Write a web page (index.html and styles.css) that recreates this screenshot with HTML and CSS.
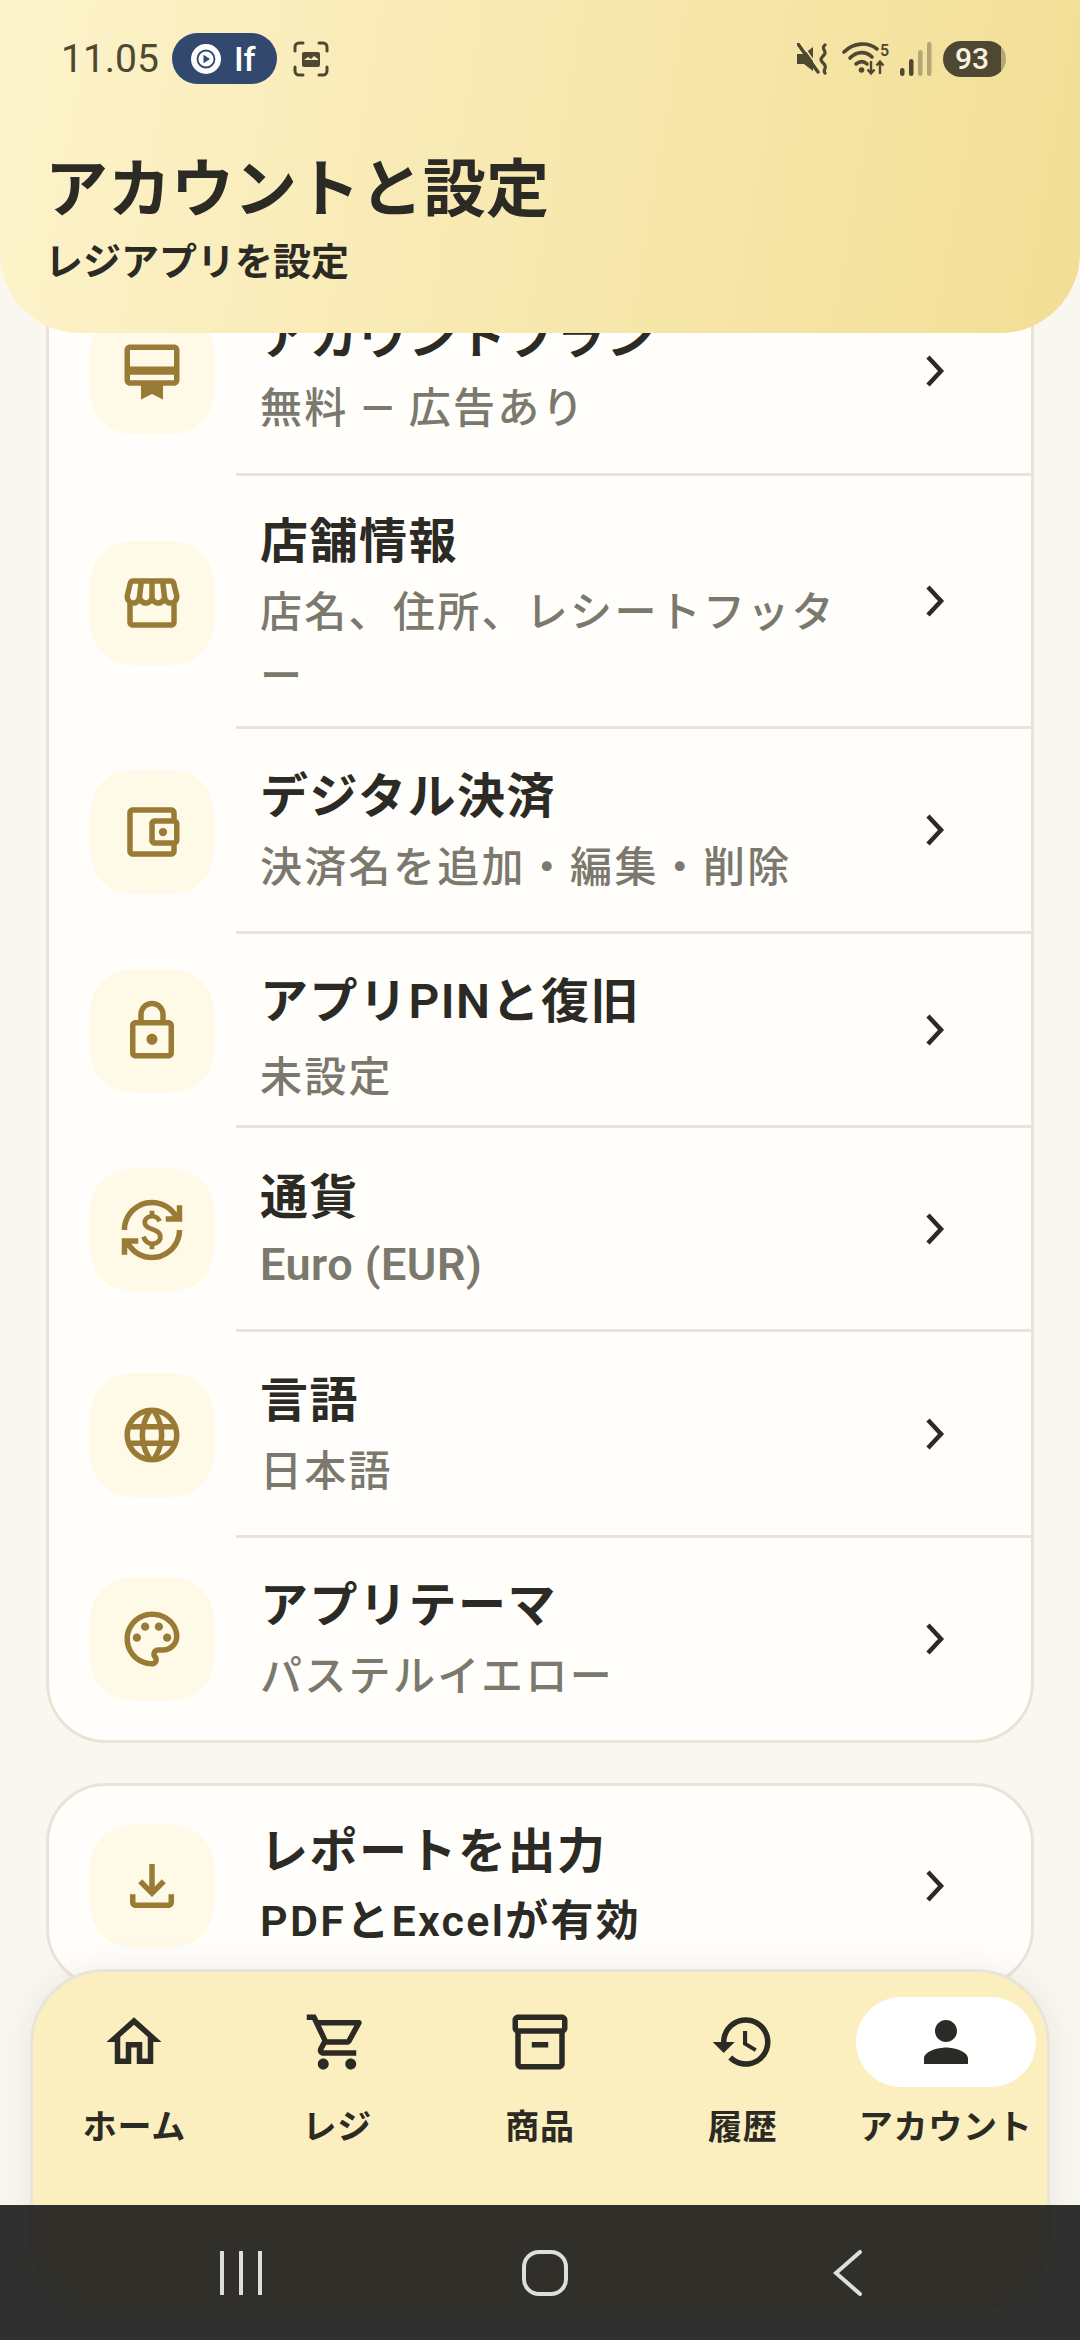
FILE: index.html
```html
<!DOCTYPE html>
<html lang="ja">
<head>
  <meta charset="UTF-8" />
  <meta name="viewport" content="width=device-width, initial-scale=1.0"/>
  <title>アカウントと設定</title>
  <link rel="stylesheet" href="styles.css">
</head>
<body>
  <!-- Header floats over the scrolled list -->
  <header class="header">
    <div class="status">
      <div class="status-left">
        <span class="clock">11.05</span>
        <span class="pill">
          <svg class="pill-icon" viewBox="0 0 30 30"><circle cx="15" cy="15" r="15" fill="#fff"/><circle cx="15" cy="15" r="8.500" fill="#fff" stroke="#33486f" stroke-width="1.800"/><path d="M12.500 10.800l6.500 4.200-6.500 4.200z" fill="#33486f"/></svg>
          <span>If</span>
        </span>
        <svg class="shot" viewBox="0 0 36 36"><path d="M2 10V6a4 4 0 0 1 4-4h4M26 2h4a4 4 0 0 1 4 4v4M34 26v4a4 4 0 0 1-4 4h-4M10 34H6a4 4 0 0 1-4-4v-4" fill="none" stroke="#4e4833" stroke-width="3" stroke-linecap="round"/><rect x="9" y="11" width="18" height="15" rx="2" fill="#4e4833"/><path d="M11 19l4-3 3 2 3-3 4 3v1H11z" fill="#f8e9b4"/></svg>
      </div>
      <div class="status-right">
        <svg class="mute" viewBox="0 0 34 32"><path d="M0 11h7l9-7v24l-9-7H0z" fill="#4e4833"/><path d="M1 1l20 28" stroke="#4e4833" stroke-width="3.400" stroke-linecap="round"/><path d="M1 1l20 28" stroke="#f8e9b4" stroke-width="1.500" transform="translate(3 -1)"/><path d="M28 2c-5 4 3 6-1 10s-4 5 0 9-2 6 1 9" fill="none" stroke="#4e4833" stroke-width="3.200" stroke-linecap="round"/></svg>
        <svg class="wifi" viewBox="0 0 50 36"><g fill="none" stroke="#4e4833" stroke-width="3.600" stroke-linecap="round"><path d="M2 11c10-10 24-10 33-3"/><path d="M8 17c7-7 16-7 22-1"/><path d="M14 23c4-3 8-3 11 0"/></g><circle cx="19.500" cy="29" r="2.800" fill="#4e4833"/><path d="M29 20v12m-3.500-3.500l3.500 4 3.500-4M38 33V21m-3.500 3.500l3.500-4 3.500 4" fill="none" stroke="#4e4833" stroke-width="2.400"/><text x="38" y="15" class="wifi-num">5</text></svg>
        <svg class="signal" viewBox="0 0 32 34"><rect x="0" y="26" width="4.500" height="8" rx="2.200" fill="#4e4833"/><rect x="9" y="17" width="4.500" height="17" rx="2.200" fill="#4e4833"/><rect x="18" y="8" width="4.500" height="26" rx="2.200" fill="#b3a677"/><rect x="27" y="0" width="4.500" height="34" rx="2.200" fill="#b3a677"/></svg>
        <span class="battery">93</span>
      </div>
    </div>
    <h1 class="page-title">アカウントと設定</h1>
    <p class="page-sub">レジアプリを設定</p>
  </header>

  <main class="content">
    <section class="card settings">
      <a class="row">
        <span class="tile"><svg class="ic" viewBox="0 0 24 24"><path d="M20 2H4c-1.11 0-2 .89-2 2v11c0 1.11.89 2 2 2h4v5l4-2 4 2v-5h4c1.11 0 2-.89 2-2V4c0-1.11-.89-2-2-2zm0 13H4v-2h16v2zm0-5H4V4h16v6z"/></svg></span>
        <div class="row-body">
          <div class="row-text">
            <div class="row-title">アカウントプラン</div>
            <div class="row-sub">無料 — 広告あり</div>
          </div>
          <svg class="chev" viewBox="0 0 20 32"><path d="M3 2l13 14L3 30"/></svg>
        </div>
      </a>
      <a class="row">
        <span class="tile"><svg class="ic" viewBox="0 0 24 24"><path d="M21.9 8.89l-1.05-4.37c-.22-.9-1-1.52-1.91-1.52H5.05c-.9 0-1.69.63-1.9 1.52L2.1 8.89c-.24 1.02-.02 2.06.62 2.88.08.11.19.19.28.29V19c0 1.1.9 2 2 2h14c1.1 0 2-.9 2-2v-6.94c.09-.09.2-.18.28-.28.64-.82.87-1.87.62-2.89zm-2.99-3.9l1.05 4.37c.1.42.01.84-.25 1.17-.14.18-.44.47-.94.47-.61 0-1.14-.49-1.21-1.14L16.98 5l1.93-.01zM13 5h1.96l.54 4.52c.05.39-.07.78-.33 1.07-.22.26-.54.41-.95.41-.67 0-1.22-.59-1.22-1.31V5zM8.49 9.52L9.04 5H11v4.69c0 .72-.55 1.31-1.29 1.31-.34 0-.65-.15-.89-.41-.25-.29-.37-.68-.33-1.07zm-4.45-.16L5.05 5h1.97l-.58 4.86c-.08.65-.6 1.14-1.21 1.14-.49 0-.8-.29-.93-.47-.27-.32-.36-.75-.26-1.17zM5 19v-6.03c.08.01.15.03.23.03.87 0 1.66-.36 2.24-.95.6.6 1.4.95 2.31.95.87 0 1.65-.36 2.23-.93.59.57 1.39.93 2.29.93.84 0 1.64-.35 2.24-.95.58.59 1.37.95 2.24.95.08 0 .15-.02.23-.03V19H5z"/></svg></span>
        <div class="row-body">
          <div class="row-text wrapped">
            <div class="row-title">店舗情報</div>
            <div class="row-sub">店名、住所、レシートフッター</div>
          </div>
          <svg class="chev" viewBox="0 0 20 32"><path d="M3 2l13 14L3 30"/></svg>
        </div>
      </a>
      <a class="row">
        <span class="tile"><svg class="ic" viewBox="0 0 24 24"><path d="M21 7.28V5c0-1.1-.9-2-2-2H5c-1.11 0-2 .9-2 2v14c0 1.1.89 2 2 2h14c1.1 0 2-.9 2-2v-2.28c.59-.35 1-.98 1-1.72V9c0-.74-.41-1.38-1-1.72zM20 9v6h-7V9h7zM5 19V5h14v2h-6c-1.1 0-2 .9-2 2v6c0 1.1.89 2 2 2h6v2H5z"/><circle cx="16" cy="12" r="1.5"/></svg></span>
        <div class="row-body">
          <div class="row-text">
            <div class="row-title">デジタル決済</div>
            <div class="row-sub">決済名を追加・編集・削除</div>
          </div>
          <svg class="chev" viewBox="0 0 20 32"><path d="M3 2l13 14L3 30"/></svg>
        </div>
      </a>
      <a class="row">
        <span class="tile"><svg class="ic" viewBox="0 0 24 24"><path d="M18 8h-1V6c0-2.76-2.24-5-5-5S7 3.24 7 6v2H6c-1.1 0-2 .9-2 2v10c0 1.1.9 2 2 2h12c1.1 0 2-.9 2-2V10c0-1.1-.9-2-2-2zM9 6c0-1.66 1.34-3 3-3s3 1.34 3 3v2H9V6zm9 14H6V10h12v10zm-6-3c1.1 0 2-.9 2-2s-.9-2-2-2-2 .9-2 2 .9 2 2 2z"/></svg></span>
        <div class="row-body">
          <div class="row-text mixed">
            <div class="row-title">アプリPINと復旧</div>
            <div class="row-sub">未設定</div>
          </div>
          <svg class="chev" viewBox="0 0 20 32"><path d="M3 2l13 14L3 30"/></svg>
        </div>
      </a>
      <a class="row">
        <span class="tile"><svg class="ic" viewBox="0 0 24 24"><path d="M12.89 11.1c-1.78-.59-2.64-.96-2.64-1.9 0-1.02 1.11-1.39 1.81-1.39 1.31 0 1.79.99 1.9 1.34l1.58-.67c-.15-.44-.82-1.91-2.66-2.23V5h-1.75v1.26c-2.6.56-2.62 2.85-2.62 2.96 0 2.27 2.25 2.91 3.35 3.31 1.58.56 2.28 1.07 2.28 2.03 0 1.13-1.05 1.61-1.98 1.61-1.82 0-2.34-1.87-2.4-2.09l-1.66.67c.63 2.19 2.28 2.78 3.02 2.96V19h1.75v-1.24c.52-.09 3.02-.59 3.02-3.22.01-1.39-.6-2.61-3-3.44zM3 21H1v-6h6v2H4.52c1.61 2.41 4.36 4 7.48 4 4.97 0 9-4.03 9-9h2c0 6.08-4.92 11-11 11-3.72 0-7.01-1.85-9-4.67V21zm-2-9C1 5.92 5.92 1 12 1c3.72 0 7.01 1.85 9 4.67V3h2v6h-6V7h2.48C17.87 4.59 15.12 3 12 3c-4.97 0-9 4.03-9 9H1z"/></svg></span>
        <div class="row-body">
          <div class="row-text">
            <div class="row-title">通貨</div>
            <div class="row-sub latin">Euro (EUR)</div>
          </div>
          <svg class="chev" viewBox="0 0 20 32"><path d="M3 2l13 14L3 30"/></svg>
        </div>
      </a>
      <a class="row">
        <span class="tile"><svg class="ic" viewBox="0 0 24 24"><path d="M11.99 2C6.47 2 2 6.48 2 12s4.47 10 9.99 10C17.52 22 22 17.52 22 12S17.52 2 11.99 2zm6.93 6h-2.95c-.32-1.25-.78-2.45-1.38-3.56 1.84.63 3.37 1.91 4.33 3.56zM12 4.04c.83 1.2 1.48 2.53 1.91 3.96h-3.82c.43-1.43 1.08-2.76 1.91-3.96zM4.26 14C4.1 13.36 4 12.69 4 12s.1-1.36.26-2h3.38c-.08.66-.14 1.32-.14 2s.06 1.34.14 2H4.26zm.82 2h2.95c.32 1.25.78 2.45 1.38 3.56-1.84-.63-3.37-1.9-4.33-3.56zm2.95-8H5.08c.96-1.66 2.49-2.93 4.33-3.56C8.81 5.55 8.35 6.75 8.03 8zM12 19.96c-.83-1.2-1.48-2.53-1.91-3.96h3.82c-.43 1.43-1.08 2.76-1.91 3.96zM14.34 14H9.66c-.09-.66-.16-1.32-.16-2s.07-1.35.16-2h4.68c.09.65.16 1.32.16 2s-.07 1.34-.16 2zm.25 5.56c.6-1.11 1.06-2.31 1.38-3.56h2.95c-.96 1.65-2.49 2.93-4.33 3.56zM16.36 14c.08-.66.14-1.32.14-2s-.06-1.34-.14-2h3.38c.16.64.26 1.31.26 2s-.1 1.36-.26 2h-3.38z"/></svg></span>
        <div class="row-body">
          <div class="row-text">
            <div class="row-title">言語</div>
            <div class="row-sub">日本語</div>
          </div>
          <svg class="chev" viewBox="0 0 20 32"><path d="M3 2l13 14L3 30"/></svg>
        </div>
      </a>
      <a class="row">
        <span class="tile"><svg class="ic" viewBox="0 0 24 24"><path d="M12 22C6.49 22 2 17.51 2 12S6.49 2 12 2s10 4.04 10 9c0 3.31-2.69 6-6 6h-1.77c-.28 0-.5.22-.5.5 0 .12.05.23.13.33.41.47.64 1.06.64 1.67 0 1.38-1.12 2.5-2.5 2.5zm0-18c-4.41 0-8 3.59-8 8s3.59 8 8 8c.28 0 .5-.22.5-.5 0-.16-.08-.28-.14-.35-.41-.46-.63-1.05-.63-1.65 0-1.38 1.12-2.5 2.5-2.5H16c2.21 0 4-1.79 4-4 0-3.86-3.59-7-8-7z"/><circle cx="6.5" cy="11.5" r="1.5"/><circle cx="9.5" cy="7.5" r="1.5"/><circle cx="14.5" cy="7.5" r="1.5"/><circle cx="17.5" cy="11.500" r="1.5"/></svg></span>
        <div class="row-body">
          <div class="row-text">
            <div class="row-title">アプリテーマ</div>
            <div class="row-sub">パステルイエロー</div>
          </div>
          <svg class="chev" viewBox="0 0 20 32"><path d="M3 2l13 14L3 30"/></svg>
        </div>
      </a>
    </section>

    <section class="card export">
      <a class="row">
        <span class="tile"><svg class="ic" viewBox="0 0 24 24"><path d="M18 15v3H6v-3H4v3c0 1.1.9 2 2 2h12c1.1 0 2-.9 2-2v-3h-2zm-1-4l-1.41-1.41L13 12.17V4h-2v8.170L8.41 9.59 7 11l5 5 5-5z"/></svg></span>
        <div class="row-body">
          <div class="row-text">
            <div class="row-title">レポートを出力</div>
            <div class="row-sub strong">PDFとExcelが有効</div>
          </div>
          <svg class="chev" viewBox="0 0 20 32"><path d="M3 2l13 14L3 30"/></svg>
        </div>
      </a>
    </section>
  </main>

  <nav class="tabs">
    <a class="tab">
      <span class="tab-icon"><svg class="ic" viewBox="0 0 24 24"><path d="M12 5.69l5 4.5V18h-2v-6H9v6H7v-7.81l5-4.5M12 3L2 12h3v8h6v-6h2v6h6v-8h3L12 3z"/></svg></span>
      <span class="tab-label">ホーム</span>
    </a>
    <a class="tab">
      <span class="tab-icon"><svg class="ic" viewBox="0 0 24 24"><path d="M15.55 13c.75 0 1.41-.41 1.75-1.03l3.58-6.49c.37-.66-.11-1.48-.87-1.48H5.21l-.94-2H1v2h2l3.6 7.59-1.35 2.44C4.52 15.37 5.48 17 7 17h12v-2H7l1.1-2h7.45zM6.16 6h12.15l-2.76 5H8.53L6.16 6zM7 18c-1.1 0-1.99.9-1.99 2S5.9 22 7 22s2-.9 2-2-.9-2-2-2zm10 0c-1.1 0-1.99.9-1.99 2s.89 2 1.99 2 2-.9 2-2-.9-2-2-2z"/></svg></span>
      <span class="tab-label">レジ</span>
    </a>
    <a class="tab">
      <span class="tab-icon"><svg class="ic" viewBox="0 0 24 24"><path d="M20 2H4c-1 0-2 .9-2 2v3.010c0 .72.43 1.34 1 1.69V20c0 1.1 1.1 2 2 2h14c.9 0 2-.9 2-2V8.700c.57-.35 1-.97 1-1.69V4c0-1.100-1-2-2-2zm-1 18H5V9h14v11zm1-13H4V4h16v3zM9 12h6v2H9z"/></svg></span>
      <span class="tab-label">商品</span>
    </a>
    <a class="tab">
      <span class="tab-icon"><svg class="ic" viewBox="0 0 24 24"><path d="M13 3c-4.97 0-9 4.030-9 9H1l3.890 3.890.07.14L9 12H6c0-3.870 3.130-7 7-7s7 3.130 7 7-3.130 7-7 7c-1.930 0-3.680-.79-4.940-2.060l-1.420 1.420C8.270 19.990 10.510 21 13 21c4.970 0 9-4.030 9-9s-4.030-9-9-9zm-1 5v5l4.280 2.540.72-1.210-3.500-2.080V8H12z"/></svg></span>
      <span class="tab-label">履歴</span>
    </a>
    <a class="tab active">
      <span class="tab-icon"><svg class="ic" viewBox="0 0 24 24"><path d="M12 12c2.210 0 4-1.790 4-4s-1.790-4-4-4-4 1.790-4 4 1.790 4 4 4zm0 2c-2.670 0-8 1.340-8 4v2h16v-2c0-2.660-5.330-4-8-4z"/></svg></span>
      <span class="tab-label">アカウント</span>
    </a>
  </nav>

  <!-- Android buttons -->
  <div class="sysbar">
    <svg class="sys-recent" viewBox="0 0 42 44"><path d="M2 1v42M21 1v42M40 1v42"/></svg>
    <svg class="sys-home" viewBox="0 0 46 46"><rect x="2" y="2" width="42" height="42" rx="15"/></svg>
    <svg class="sys-back" viewBox="0 0 30 46"><path d="M27 2L3 23l24 21"/></svg>
  </div>
</body>
</html>
```

FILE: styles.css
```css
* {
  box-sizing: border-box;
}
html, body {
  margin: 0;
  height: 2340px;
  overflow: hidden;
}
body {
  position: relative;
  width: 1080px;
  background: #faf7f1;
  color: #2b2a24;
  font-family: Roboto, "Noto Sans CJK JP", sans-serif;
}

/* header */
.header {
  position: absolute;
  top: 0;
  left: 0;
  width: 100%;
  height: 333px;
  z-index: 2;
  padding: 33px 74px 0 45px;
  background: linear-gradient(100deg, #fdf3cb 0%, #f2de95 100%);
  border-radius: 0 0 80px 80px;
}
.status {
  display: flex;
  justify-content: space-between;
  align-items: center;
  height: 51px;
  margin-bottom: 66px;
}
.status-left, .status-right {
  display: flex;
  align-items: center;
}
.clock {
  font-size: 39px;
  color: #4e4833;
  margin-left: 16px;
  margin-right: 13px;
}
.pill {
  display: flex;
  align-items: center;
  gap: 13px;
  width: 105px;
  height: 51px;
  padding-left: 19px;
  border-radius: 26px;
  background: #33486f;
  color: #fff;
  font-size: 34px;
  font-weight: 500;
}
.pill-icon {
  width: 30px;
  height: 30px;
}
.shot {
  width: 36px;
  height: 36px;
  margin-left: 16px;
}
.mute {
  width: 34px;
  height: 32px;
  margin-right: 11px;
}
.wifi {
  width: 50px;
  height: 36px;
  margin-right: 8px;
}
.wifi-num {
  font: 600 16px Roboto, sans-serif;
  fill: #4e4833;
}
.signal {
  width: 32px;
  height: 34px;
  margin-right: 11px;
}
.battery {
  width: 63px;
  height: 36px;
  line-height: 36px;
  padding-right: 5px;
  text-align: center;
  font-size: 30px;
  font-weight: 500;
  color: #f7f2df;
  border-radius: 18px;
  background: linear-gradient(90deg, #4e4833 92%, #b3a677 92%);
}
.page-title {
  margin: 0;
  font-size: 63px;
  line-height: 80px;
  font-weight: 600;
}
.page-sub {
  margin: 7px 0 0;
  font-size: 38px;
  line-height: 50px;
  font-weight: 600;
}

/* list */
.content {
  padding: 265px 46px 0;
}
.card {
  background: #fffefa;
  border: 3px solid #e8e4da;
  border-radius: 60px;
  overflow: hidden;
}
.settings {
  display: grid;
  grid-template-rows: 208px 253px 205px 194px 204px 206px 202px;
}
.export {
  margin-top: 40px;
  height: 205px;
}
.row {
  display: flex;
  align-items: center;
  height: 100%;
}
.tile {
  flex: none;
  display: flex;
  align-items: center;
  justify-content: center;
  width: 124px;
  height: 124px;
  margin: 0 22px 0 41px;
  border-radius: 42px;
  background: #fff9e8;
  fill: #9a7b36;
}
.ic {
  width: 66px;
  height: 66px;
}
.row-body {
  flex: 1;
  display: flex;
  align-items: center;
  height: 100%;
  padding-left: 24px;
  border-bottom: 3px solid #e8e4da;
}
.settings .row:last-child .row-body, .export .row-body {
  border-bottom: 0;
}
.row-text {
  width: 600px;
  margin-right: 65px;
  padding-top: 4px;
}
.row-text.wrapped {
  padding-top: 16px;
}
.row-text.mixed {
  padding-top: 20px;
}
.row-text.mixed .row-title {
  margin-bottom: 11px;
}
.export .row-text {
  padding-top: 0;
}
.row-title {
  font-size: 48px;
  line-height: 66px;
  font-weight: 600;
  letter-spacing: 1.500px;
  margin-bottom: 6px;
}
.row-sub {
  font-size: 42px;
  line-height: 64px;
  font-weight: 500;
  letter-spacing: 2.300px;
  color: #7b786e;
}
.row-sub.latin {
  font-size: 45px;
  font-weight: 600;
  letter-spacing: 0.500px;
  margin-top: -4px;
}
.row-sub.strong {
  color: #2b2a24;
  font-size: 43px;
  font-weight: 600;
  margin-top: -2px;
}
.chev {
  width: 20px;
  height: 32px;
  fill: none;
  stroke: #2b2a24;
  stroke-width: 4.500;
}

/* bottom tabs */
.tabs {
  position: absolute;
  left: 30px;
  top: 1969px;
  z-index: 3;
  display: flex;
  width: 1020px;
  height: 342px;
  padding: 25px 0 0;
  justify-content: center;
  background: #fcefbf;
  border: 3px solid #e8e4da;
  border-radius: 75px;
  box-shadow: 0 0 36px rgba(0,0,0,0.07);
}
.tab {
  display: flex;
  flex-direction: column;
  align-items: center;
  width: 203px;
}
.tab-icon {
  display: flex;
  align-items: center;
  justify-content: center;
  width: 180px;
  height: 90px;
  border-radius: 45px;
  fill: #2b2a24;
}
.tab.active .tab-icon {
  background: #fff;
}
.tab-label {
  margin-top: 18px;
  font-size: 34px;
  line-height: 44px;
  font-weight: 600;
  letter-spacing: 0.700px;
}

/* system bar */
.sysbar {
  position: absolute;
  left: 0;
  bottom: 0;
  z-index: 4;
  display: flex;
  align-items: center;
  width: 100%;
  height: 135px;
  background: rgba(20,20,20,0.88);
  fill: none;
  stroke: #dedede;
  stroke-width: 4;
  stroke-linecap: round;
}
.sys-recent {
  width: 42px;
  height: 44px;
  margin-left: 220px;
}
.sys-home {
  width: 46px;
  height: 46px;
  margin-left: 260px;
}
.sys-back {
  width: 30px;
  height: 46px;
  margin-left: 265px;
}
```
